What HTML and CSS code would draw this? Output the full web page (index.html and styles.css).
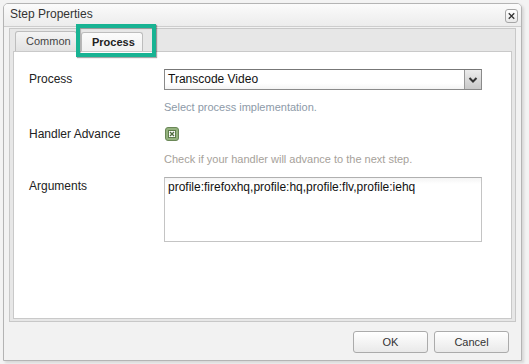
FILE: index.html
```html
<!DOCTYPE html>
<html>
<head>
<meta charset="utf-8">
<link rel="stylesheet" href="styles.css">
</head>
<body>
<div class="dialog">
  <div class="titlebar">
    <span class="title">Step Properties</span>
    <span class="close">
      <svg width="12" height="12" viewBox="0 0 12 12"><path d="M3 3 L9 9 M9 3 L3 9" stroke="#333" stroke-width="1.4" fill="none"/></svg>
    </span>
  </div>
  <div class="tabframe">
    <div class="tabs">
      <div class="tab">Common</div>
      <div class="tab active">Process</div>
    </div>
    <div class="panel">
      <div class="row r1">
        <div class="label">Process</div>
        <div class="field">
          <div class="select">
            <span class="select-text">Transcode Video</span>
            <span class="select-arrow">
              <svg width="10" height="8" viewBox="0 0 10 8"><path d="M1.5 2 L5 5.5 L8.5 2" stroke="#333" stroke-width="2" fill="none"/></svg>
            </span>
          </div>
          <div class="help help-blue">Select process implementation.</div>
        </div>
      </div>
      <div class="row r2">
        <div class="label lh14">Handler Advance</div>
        <div class="field">
          <svg class="check" width="14" height="14" viewBox="0 0 14 14">
            <rect x="0.5" y="0.5" width="13" height="13" rx="2.5" fill="#94b27e" stroke="#6a8757"/>
            <rect x="3.5" y="3.5" width="7" height="7" fill="#fff" stroke="#5f7d4c"/>
            <path d="M5 5 L9 9 M9 5 L5 9" stroke="#4f6b3e" stroke-width="1.4"/>
          </svg>
          <div class="help help-warm">Check if your handler will advance to the next step.</div>
        </div>
      </div>
      <div class="row r3">
        <div class="label lh18">Arguments</div>
        <div class="field">
          <div class="textarea">profile:firefoxhq,profile:hq,profile:flv,profile:iehq</div>
        </div>
      </div>
    </div>
  </div>
  <div class="buttons">
    <div class="btn">OK</div>
    <div class="btn">Cancel</div>
  </div>
</div>
<div class="annot"></div>
</body>
</html>
```

FILE: styles.css
```css
html, body {
  margin: 0;
  padding: 0;
}
body {
  width: 529px;
  height: 364px;
  background: #f3f3f3;
  font-family: "Liberation Sans", Arial, sans-serif;
  position: relative;
  overflow: hidden;
}
.dialog {
  box-sizing: border-box;
  margin: 3px 0 0 3px;
  width: 519px;
  height: 358px;
  border: 1px solid #b4b4b4;
  border-radius: 5px 5px 0 0;
  background: #f2f2f2;
  box-shadow: 2px 2px 3px rgba(0,0,0,0.12);
  display: flex;
  flex-direction: column;
}
.titlebar {
  height: 22px;
  border-bottom: 1px solid #cdcdcd;
  background: linear-gradient(#fbfbfb, #ececec);
  border-radius: 4px 4px 0 0;
  display: flex;
  align-items: center;
  justify-content: space-between;
  padding: 0 3px 0 6px;
}
.title {
  font-size: 12px;
  color: #333;
  position: relative;
  top: -1px;
}
.close {
  box-sizing: border-box;
  width: 13px;
  height: 14px;
  border: 1px solid #a6a6a6;
  border-radius: 3px;
  background: linear-gradient(#ffffff, #e9e9e9);
  display: flex;
  align-items: center;
  justify-content: center;
  position: relative;
  top: 1px;
}
.close svg { display: block; }
.tabframe {
  box-sizing: border-box;
  margin: 1px 5px 0 5px;
  height: 294px;
  border: 1px solid #c8c8c8;
  background: #e7e7e7;
  padding: 2px 3px 2px 3px;
  display: flex;
  flex-direction: column;
}
.tabs {
  display: flex;
  gap: 4px;
  padding-left: 2px;
  height: 20px;
  align-items: flex-end;
}
.tab {
  box-sizing: border-box;
  height: 20px;
  border: 1px solid #bdbdbd;
  border-bottom: none;
  border-radius: 3px 3px 0 0;
  background: linear-gradient(#f4f4f4, #e2e2e2);
  font-size: 11px;
  color: #444;
  padding: 0 0 0 10px;
  line-height: 19px;
  width: 62px;
}
.tab.active {
  height: 19px;
  width: 62px;
  background: linear-gradient(#fbfbfb, #f1f1f1);
  font-weight: bold;
  color: #222;
}
.panel {
  flex: 1;
  background: #fff;
  border: 1px solid #c9c9c9;
  padding: 17px 0 0 15px;
}
.row {
  display: grid;
  grid-template-columns: 135px 318px;
}
.r2 { margin-top: 13px; }
.r3 { margin-top: 11px; }
.label {
  font-size: 12px;
  color: #222;
  line-height: 21px;
}
.label.lh14 { line-height: 14px; }
.label.lh18 { line-height: 18px; }
.select {
  box-sizing: border-box;
  height: 21px;
  border: 1px solid #8a8a8a;
  border-top-color: #777;
  background: linear-gradient(#ffffff 70%, #f4f4f4);
  display: flex;
  align-items: stretch;
}
.select-text {
  flex: 1;
  font-size: 12px;
  line-height: 19px;
  padding-left: 3px;
  color: #111;
}
.select-arrow {
  width: 16px;
  border-left: 1px solid #9a9a9a;
  background: linear-gradient(#ececec, #c9c9c9);
  display: flex;
  align-items: center;
  justify-content: center;
}
.select-arrow svg { display: block; }
.help {
  font-size: 11px;
  line-height: 14px;
}
.help-blue { color: #8d9aa8; margin-top: 10px; }
.help-warm { color: #a6a19a; margin-top: 11px; }
.check { display: block; margin-left: 1px; }
.textarea {
  box-sizing: border-box;
  height: 65px;
  border: 1px solid #c4c4c4;
  border-top-color: #b0b0b0;
  background: linear-gradient(#f4f4f4, #ffffff 6px);
  font-size: 12px;
  color: #111;
  padding: 2px 3px;
  line-height: 15px;
}
.buttons {
  display: flex;
  justify-content: flex-end;
  gap: 6px;
  padding: 9px 12px 0 0;
}
.btn {
  box-sizing: border-box;
  width: 75px;
  height: 22px;
  border: 1px solid #ababab;
  border-radius: 3px;
  background: linear-gradient(#ffffff, #e9e9e9);
  font-size: 11px;
  color: #333;
  text-align: center;
  line-height: 20px;
}
.annot {
  position: absolute;
  left: 76px;
  top: 24px;
  width: 80px;
  height: 33px;
  box-sizing: border-box;
  border: 4px solid #18b393;
  box-shadow: 1px 1px 1px rgba(0,0,0,0.35), inset 1px 1px 1px rgba(0,0,0,0.25);
}
```
